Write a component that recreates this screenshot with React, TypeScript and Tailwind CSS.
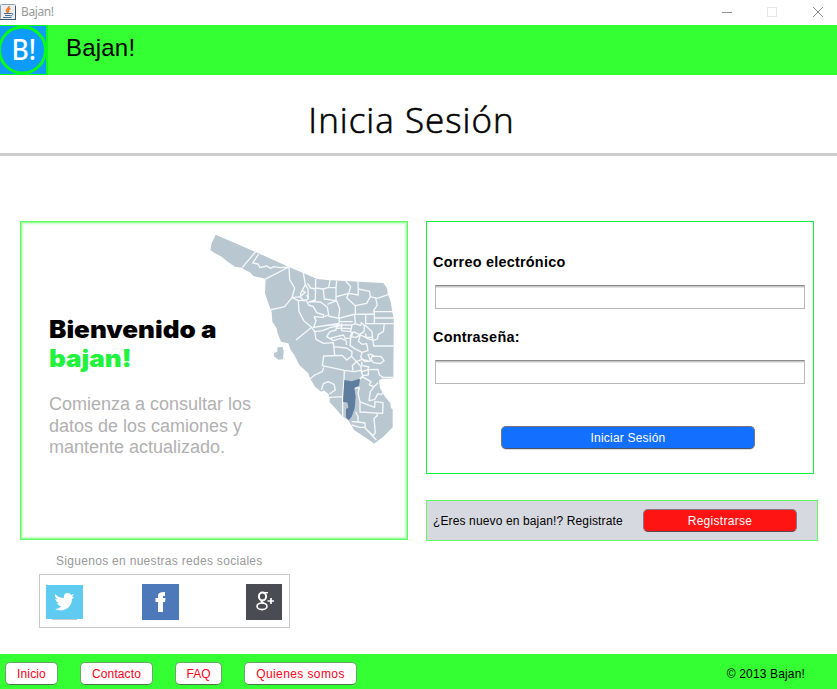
import React from "react";

const regionLines = [
  "M167 110L127 157",
  "M176 117L158 144L174 147L180 158L200 153L212 160L221 155L240 158L267 156L193 194",
  "M267 156L269 194L284 219L276 248L254 275L210 285",
  "M310 174L316 209L302 235L302 245L276 248L295 257L297 290L312 318L335 337L288 375",
  "M316 209L324 222L325 252L312 258L300 245L316 232L306 226M320 240L325 252",
  "M322 205L332 219L347 222M347 192L346 255L325 262",
  "M347 219L370 222L386 217L390 195M386 217L408 218L410 197M408 218L408 257L373 252L370 224",
  "M295 257L318 255L326 270L340 275L350 293L372 300L370 307L342 305",
  "M330 260L362 261L382 277L386 300L374 305M382 268L410 257L419 282L416 310L385 303",
  "M437 198L452 215L446 235L410 245M446 235L475 240L474 199M446 235L440 248L466 272",
  "M475 222L509 229L511 245L500 265L466 272L466 297L416 310",
  "M511 245L532 250L566 238M527 250L532 270L521 287L523 297L466 298",
  "M523 290H580M497 298V327M523 297V326M523 309H581M497 326H581",
  "M342 305L348 317L341 337L387 330L417 325L418 310M418 319L458 320",
  "M335 337L344 350L368 347L392 337L425 332M387 330L410 330L408 345L390 350L380 365L400 377",
  "M410 330H456M410 339L455 341M425 325V347L452 350L456 330L466 326L464 300",
  "M466 326L482 332L484 323L493 331L492 350L478 359L460 350",
  "M495 330L516 350L518 375L500 370L496 355M553 326L550 350L535 358L532 372L519 377L521 393H580",
  "M460 350L452 370L436 370L430 360L410 365L390 370M344 350L348 373L371 385L400 383L404 420",
  "M400 377L422 370L438 376L440 390M456 350L451 365L468 367L481 360L497 367L518 367",
  "M452 370L450 391L463 400L486 412L504 407L500 386L486 388L475 379L481 360",
  "M400 395L440 399L456 410L455 424L440 435L427 421L371 423L367 452L433 466L462 470L483 466",
  "M455 424L469 440L486 433L503 437M486 412L482 427L495 440L512 438L504 418L513 418L525 424",
  "M513 433L516 424L543 424L552 437L541 446L520 443L513 433",
  "M469 440L457 452L459 467M469 440L483 455L484 470L502 465L507 456L485 451L486 440",
  "M484 470L488 482L505 480L505 464L534 463L538 480L549 487H580",
  "M371 457L367 470L344 480L331 491M433 466L432 497M488 482L480 493",
  "M364 525L370 506L385 500L402 508L406 525L388 537M388 547L428 545L432 497",
  "M428 545V610M388 547L387 560M478 492L486 485L513 500L508 510L522 515L534 503",
  "M465 520L478 518L474 535L480 560L480 591L548 595L549 563L525 560L524 577L478 560",
  "M522 515L511 530L507 557L524 554L534 536L544 539L552 530",
  "M467 590L474 605L474 621L455 620M474 621L495 624L496 640L520 662L526 653L522 610L532 602L530 594",
  "M455 630L480 637L497 637M496 640L529 675",
];

function SonoraMap() {
  return (
    <svg viewBox="0 30 600 690" className="col-start-1 row-start-1 mt-[3px] ml-[179px] h-[230px] w-[200px]" aria-hidden="true">
      <path fill="#b9c7d1" d="M47 59L165 110L267 156L352 192L380 195L550 204L561 220L563 235L572 260L577 290L581 312L581 345L580 490L545 491L537 497L540 520L555 545L571 565L573 580L578 582V637L550 665L522 686L512 678L485 660L462 645L445 616L425 602L408 582L388 560L386 538L372 526L364 530L345 515L331 491L325 475L298 450L283 420L272 405L265 385L243 380L232 352L230 340L217 320L215 290L207 270L195 235L197 195L190 190L160 183L150 172L135 165L126 158L105 155L85 142L65 125L45 115L31 106L35 85Z" />
      <path fill="#b9c7d1" d="M232 397L248 396L251 410L249 433L235 434L222 424L222 414L232 410Z" />
      <path fill="none" stroke="#f6f9fb" strokeWidth="4" strokeLinejoin="round" d={regionLines.join("")} />
      <path fill="#5f7d9e" d="M433 495L455 499L480 491L477 512L463 518L467 545L464 580L455 605L446 616L438 607V582L445 578L443 563L429 560Z" />
    </svg>
  );
}

function JavaIcon() {
  return (
    <svg viewBox="0 0 16 16" className="-mt-px h-4 w-4">
      <rect x=".5" y=".5" width="15" height="15" rx="1" fill="#e9eef2" stroke="#8fa0ae" />
      <path d="M0 15.5H16M15.5 2V16" stroke="#3f566c" />
      <path d="M9 2C10 4 5.5 5 6.5 7L8 9M10.5 4.5C8 5.5 8 6.5 9 8" fill="none" stroke="#ec7a22" strokeWidth="1.6" />
      <path d="M4 9.5H11M5 11.5H10.5M3 13.5H11.5M11 9.5C14 9 13 11.5 10.5 12" fill="none" stroke="#456e91" />
    </svg>
  );
}

function TextField({ id, label }: { id: string; label: string }) {
  return (
    <div className="flex h-[75px] flex-col">
      <label htmlFor={id} className="pl-[6px] text-[14.4px] leading-[17px] font-bold tracking-[0.25px]">{label}</label>
      <input id={id} className="mt-[14px] ml-2 h-6 w-[370px] border border-[#b8b8b8] border-t-[#8c8c8c] bg-white px-1 text-xs shadow-[inset_0_1px_0_#c8c8c8,inset_0_2px_0_#e4e4e4] outline-none" />
    </div>
  );
}

const footerLinks = [
  { label: "Inicio", size: "w-[53px] tracking-[0.15px]" },
  { label: "Contacto", size: "w-[73px] tracking-[0.1px]" },
  { label: "FAQ", size: "w-[47px]" },
  { label: "Quienes somos", size: "w-[113px] tracking-[0.4px]" },
];

export default function App() {
  return (
    <div className="flex h-[689px] w-[837px] flex-col overflow-hidden bg-white font-['Liberation_Sans',Arial,sans-serif] text-black">
      <div className="flex h-[25px] shrink-0 items-center justify-between">
        <div className="flex items-center gap-[5px]">
          <JavaIcon />
          <span className="-mt-[2px] font-['Noto_Sans',sans-serif] text-[12px] tracking-[-0.4px] text-[#999]">Bajan!</span>
        </div>
        <svg viewBox="0 0 115 25" className="h-[25px] w-[115px]" fill="none" shapeRendering="crispEdges">
          <path d="M0 12.5H10" stroke="#909090" />
          <rect x="45.500" y="7.500" width="9" height="9" stroke="#e8e8e8" />
          <path d="M91 7L101 17M101 7L91 17" stroke="#888" shapeRendering="auto" />
        </svg>
      </div>

      <header className="flex h-[50px] shrink-0 bg-[#33ff33]">
        <svg viewBox="0 0 48 50" className="h-[50px] w-12">
          <rect width="48" height="50" fill="#0cf91d" />
          <rect y="1" width="46" height="48" fill="#0e9cfa" />
          <circle cx="22.500" cy="25" r="23" fill="#0e9cfa" stroke="#0cf91d" strokeWidth="3" />
          <text x="11.500" y="35" fontFamily="Noto Sans, sans-serif" fontSize="28" fontWeight="500" fill="#fff" textLength="24.500" lengthAdjust="spacingAndGlyphs">B!</text>
        </svg>
        <span className="mt-[8px] ml-[18px] text-[24px] leading-[30px] tracking-[0.2px]">Bajan!</span>
      </header>

      <div className="flex h-[81px] shrink-0 justify-center border-b-[3px] border-[#ccc] pr-[14px]">
        <h1 className="mt-[20px] font-['Open_Sans','Noto_Sans',sans-serif] text-[35px] leading-[50px] font-light tracking-[1px] [-webkit-text-stroke:0.6px_black]">Inicia Sesión</h1>
      </div>

      <main className="flex min-h-0 flex-1 gap-[18px] pt-[65px] pl-5">
        <div className="flex w-[388px] flex-col">
          <section className="grid h-[319px] grid-cols-1 grid-rows-1 border border-[#62fa62] shadow-[inset_0_0_0_1px_#9dff9d,inset_0_0_0_2px_#d4ffd4,inset_0_0_0_3px_#f0fff0]">
            <SonoraMap />
            <div className="col-start-1 row-start-1 mt-[93px] ml-[28px] w-[230px]">
              <h2 className="origin-left scale-x-[1.085] font-['Inter',sans-serif] text-[24px] leading-[29px] font-black whitespace-nowrap">Bienvenido a<br /><span className="text-[#20f23d]">bajan!</span></h2>
              <p className="mt-[21px] text-[18px] leading-[21.5px] whitespace-nowrap text-[#b2b0b2]">Comienza a consultar los<br />datos de los camiones y<br />mantente actualizado.</p>
            </div>
          </section>
          <p className="mt-[13px] ml-9 text-[12px] leading-4 tracking-[0.3px] text-[#999]">Siguenos en nuestras redes sociales</p>
          <div className="mt-[5px] ml-[19px] flex h-[54px] w-[251px] items-center justify-between border border-[#c8c8c8] pt-[2px] pr-[7px] pl-[6px]">
            <svg viewBox="0 0 37 36" className="h-9 w-[37px]">
              <path fill="#60cbf0" d="M0 1H37V35H0Z" /><path d="M6 35.500H31" stroke="#c8c8cc" />
              <path fill="#fff" d="M9 10C12 13 15 14 18 14C17 8 24 8 25 11L28 10L26 13L28 13L26 15C26 24 17 29 9 25C12 25 14 24 15 22C13 22 12 21 11 19H13C11 18 10 17 9 15H11C9 13 9 12 9 10Z" />
            </svg>
            <svg viewBox="0 0 37 36" className="mr-[8px] h-9 w-[37px]">
              <path fill="#4d79bb" d="M0 0H37V36H0Z" /><path fill="#fff" d="M16 28V18H13.500V14H16V12C16 9 18 8 23 8V12H21V14H23.500L23 18H21V28Z" />
            </svg>
            <svg viewBox="0 0 36 36" className="h-9 w-9" fill="none" stroke="#fff">
              <path fill="#4b4b54" stroke="none" d="M0 0H36V36H0Z" />
              <ellipse cx="16.500" cy="12.500" rx="3.600" ry="3.900" strokeWidth="2" />
              <path d="M17 8.700H22" strokeWidth="1.400" />
              <path d="M18 16C14 17.500 15 18.500 18 19.300" strokeWidth="1.800" />
              <ellipse cx="16" cy="22.300" rx="5" ry="3.300" strokeWidth="1.600" />
              <path d="M21.500 17H28M25 14V20" strokeWidth="1.700" />
            </svg>
          </div>
        </div>

        <div className="flex w-[392px] flex-col">
          <form className="flex h-[253px] w-[388px] flex-col border border-[#12ef3c] pt-[32px]" onSubmit={(event) => event.preventDefault()}>
            <TextField id="correo" label="Correo electrónico" />
            <TextField id="clave" label="Contraseña:" />
            <button className="mt-[22px] ml-[74px] h-[23px] w-[254px] shrink-0 rounded-[5px] border border-[#777] border-b-[#4d5666] bg-[#136ffd] text-[12px] tracking-[0.2px] text-white shadow-[0_1px_0_#ddd]">Iniciar Sesión</button>
          </form>
          <div className="mt-[26px] flex h-[41px] items-center border border-[#62fa62] bg-[#d6d9e0] pl-[6px]">
            <span className="w-[210px] text-[12px] tracking-[0.13px] whitespace-nowrap">¿Eres nuevo en bajan!? Registrate</span>
            <button className="h-[23px] w-[154px] rounded-[5px] border border-[#85777d] border-b-[#594b50] bg-[#ff1414] text-[12px] tracking-[0.3px] text-white">Registrarse</button>
          </div>
        </div>
      </main>

      <footer className="flex h-[35px] shrink-0 items-start justify-between bg-[#33ff33] pr-8 pl-[5px]">
        <nav className="flex gap-[22px] pt-[8px]">
          {footerLinks.map((link) => (
            <button key={link.label} className={`h-[23px] rounded-[5px] border border-[#68a568] border-b-[#4d754d] bg-white text-[12px] text-[#fa0019] ${link.size}`}>{link.label}</button>
          ))}
        </nav>
        <span className="pt-[12px] text-[12px] leading-4 tracking-[0.15px]">© 2013 Bajan!</span>
      </footer>
    </div>
  );
}
